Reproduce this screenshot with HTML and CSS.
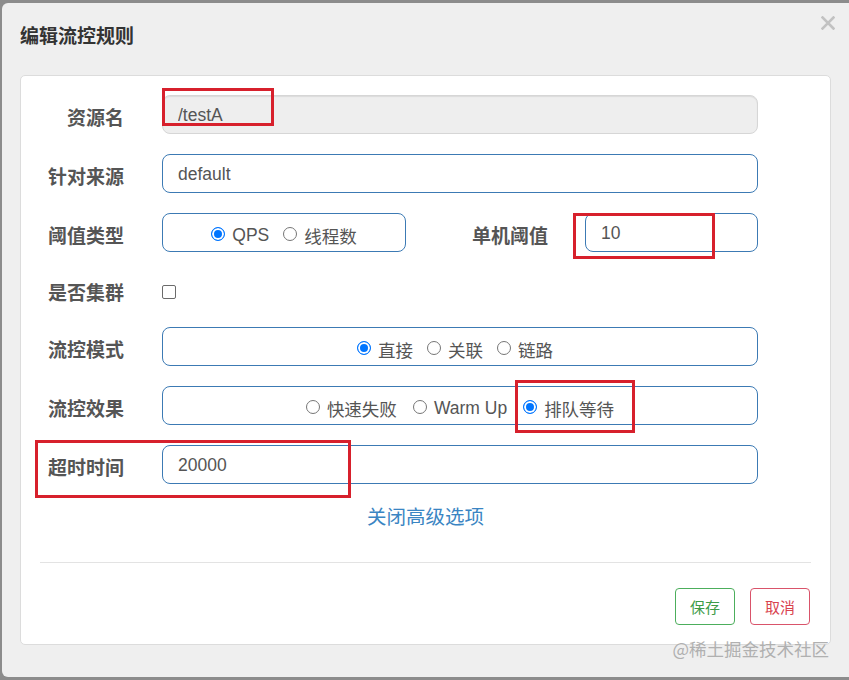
FILE: index.html
```html
<!DOCTYPE html>
<html lang="zh">
<head>
    <meta charset="UTF-8">
    <title>编辑流控规则</title>
    <link rel="stylesheet" href="styles.css">
</head>
<body>

<!-- 弹窗 -->
<div class="dialog">
    <div class="dialog-header">
        <h4 class="dialog-title">编辑流控规则</h4>
        <button class="close-btn" title="关闭">
            <svg width="14" height="14" viewBox="0 0 14 14"><path d="M1.5 1.5 L12.5 12.5 M12.5 1.5 L1.5 12.5" stroke="#c2c2c2" stroke-width="2.6" stroke-linecap="square"/></svg>
        </button>
    </div>

    <div class="card">
        <div class="form-row">
            <label class="form-label">资源名</label>
            <input class="form-input disabled" type="text" value="/testA" disabled>
        </div>

        <div class="form-row">
            <label class="form-label">针对来源</label>
            <input class="form-input" type="text" value="default">
        </div>

        <div class="form-row">
            <label class="form-label">阈值类型</label>
            <div class="split">
                <div class="radio-box small">
                    <label class="radio"><input type="radio" name="grade" checked>QPS</label>
                    <label class="radio"><input type="radio" name="grade">线程数</label>
                </div>
                <label class="form-label inline">单机阈值</label>
                <input class="form-input short" type="text" value="10">
            </div>
        </div>

        <div class="form-row check-row">
            <label class="form-label">是否集群</label>
            <input class="checkbox" type="checkbox">
        </div>

        <div class="form-row">
            <label class="form-label">流控模式</label>
            <div class="radio-box">
                <label class="radio"><input type="radio" name="strategy" checked>直接</label>
                <label class="radio"><input type="radio" name="strategy">关联</label>
                <label class="radio"><input type="radio" name="strategy">链路</label>
            </div>
        </div>

        <div class="form-row">
            <label class="form-label">流控效果</label>
            <div class="radio-box wide">
                <label class="radio"><input type="radio" name="behavior">快速失败</label>
                <label class="radio"><input type="radio" name="behavior">Warm Up</label>
                <label class="radio"><input type="radio" name="behavior" checked>排队等待</label>
            </div>
        </div>

        <div class="form-row">
            <label class="form-label">超时时间</label>
            <input class="form-input" type="text" value="20000">
        </div>

        <a class="toggle-link" href="#">关闭高级选项</a>

        <hr class="divider">

        <div class="footer">
            <button class="btn btn-save">保存</button>
            <button class="btn btn-cancel">取消</button>
        </div>

        <!-- 红框标注 -->
        <div class="mark mark-1"></div>
        <div class="mark mark-2"></div>
        <div class="mark mark-3"></div>
        <div class="mark mark-4"></div>
    </div>

    <div class="watermark">@稀土掘金技术社区</div>
</div>

</body>
</html>
```

FILE: styles.css
```css
* {
    box-sizing: border-box;
}

body {
    margin: 0;
    padding: 3px 0 3px 2px;
    background-color: #8c8c8c;
    font-family: "Liberation Sans", "Noto Sans CJK SC", sans-serif;
    overflow: hidden;
}

/* 弹窗 */
.dialog {
    position: relative;
    height: 674px;
    background-color: #efefef;
    border-radius: 6px 0 0 6px;
}

.dialog-header {
    height: 72px;
    display: flex;
    justify-content: space-between;
    align-items: flex-start;
    padding: 0 14px 0 18px;
}

.dialog-title {
    margin: 19px 0 0 0;
    font-size: 19px;
    line-height: 26px;
    font-weight: bold;
    color: #333;
    font-family: "Noto Sans CJK SC", sans-serif;
}

.close-btn {
    margin-top: 13px;
    padding: 0;
    border: none;
    background: none;
    cursor: pointer;
}

/* 白色卡片 */
.card {
    position: relative;
    margin: 0 18px;
    height: 570px;
    background-color: #fff;
    border: 1px solid #dcdcdc;
    border-radius: 5px;
    padding: 19px 72px 0 0;
}

.form-row {
    display: flex;
    align-items: center;
    height: 39px;
    margin-bottom: 20px;
}
.check-row {
    height: 35px;
}

.form-label {
    width: 103px;
    flex-shrink: 0;
    margin-right: 38px;
    padding-top: 4px;
    text-align: right;
    font-family: "Noto Sans CJK SC", sans-serif;
    font-size: 19px;
    font-weight: bold;
    color: #555;
}
.form-label.inline {
    width: auto;
    flex: 1;
    margin-right: 37px;
}

.form-input {
    flex: 1;
    height: 39px;
    padding: 2px 15px 0 15px;
    border: 1px solid #3c7ab4;
    border-radius: 8px;
    font-family: "Liberation Sans", "Noto Sans CJK SC", sans-serif;
    font-size: 17.5px;
    color: #555;
    background-color: #fff;
    outline: none;
}
.form-input.disabled {
    background-color: #eee;
    border-color: #d6d6d6;
    box-shadow: inset 0 1px 1px rgba(0, 0, 0, 0.08);
}
.form-input.short {
    flex: none;
    width: 173px;
}

.split {
    flex: 1;
    display: flex;
    align-items: center;
}

/* 单选框 */
.radio-box {
    flex: 1;
    height: 39px;
    display: flex;
    justify-content: center;
    align-items: center;
    gap: 14px;
    border: 1px solid #3c7ab4;
    border-radius: 8px;
    padding: 5px 10px 0 0;
}
.radio-box.small {
    flex: none;
    width: 244px;
    padding-right: 0;
}
.radio-box.wide {
    gap: 16px;
    padding-right: 0;
}

.radio {
    display: flex;
    align-items: center;
    font-size: 17.5px;
    color: #555;
}
.radio input {
    appearance: none;
    width: 14px;
    height: 14px;
    margin: -3px 7px 0 0;
    border: 1px solid #767676;
    border-radius: 50%;
    background-color: #fff;
}
.radio input:checked {
    border-color: #0075ff;
    background-color: #0075ff;
    box-shadow: inset 0 0 0 2px #fff;
}

.checkbox {
    appearance: none;
    width: 14px;
    height: 14px;
    margin: 4px 0 0 0;
    border: 1px solid #6b6b6b;
    border-radius: 2px;
    background-color: #fff;
}

.toggle-link {
    display: block;
    margin: 20px 0 0 72px;
    text-align: center;
    line-height: 24px;
    font-size: 19.5px;
    color: #3a85c3;
    text-decoration: none;
    font-family: "Noto Sans CJK SC", sans-serif;
}

.divider {
    margin: 34px -53px 0 19px;
    border: none;
    border-top: 1px solid #e3e3e3;
}

.footer {
    display: flex;
    justify-content: flex-end;
    gap: 15px;
    margin: 25px -52px 0 0;
}

.btn {
    width: 60px;
    height: 37px;
    background-color: #fff;
    border: 1px solid;
    border-radius: 4px;
    font-family: "Noto Sans CJK SC", sans-serif;
    font-size: 15px;
    cursor: pointer;
}
.btn-save {
    color: #3d9c48;
    border-color: #4cae5c;
}
.btn-cancel {
    color: #d9424f;
    border-color: #d9536a;
}

/* 红框标注 */
.mark {
    position: absolute;
    border: 3px solid #d7202c;
    pointer-events: none;
}
.mark-1 { left: 141px; top: 12px; width: 112px; height: 38px; }
.mark-2 { left: 552px; top: 137px; width: 142px; height: 46px; }
.mark-3 { left: 494px; top: 304px; width: 120px; height: 53px; }
.mark-4 { left: 14px; top: 364px; width: 316px; height: 58px; }

.watermark {
    position: absolute;
    right: 20px;
    bottom: 16px;
    font-family: "Noto Sans CJK SC", sans-serif;
    font-size: 17.5px;
    color: #b0b0b0;
}
```
